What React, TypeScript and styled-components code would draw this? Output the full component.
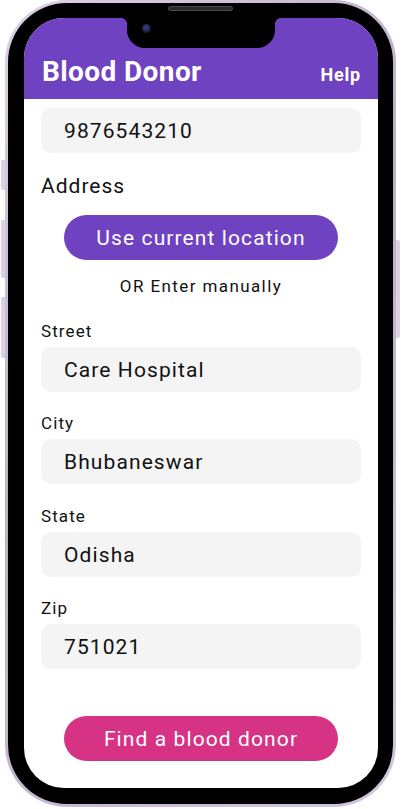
import React from "react";
import styled, { createGlobalStyle } from "styled-components";

const GlobalStyle = createGlobalStyle`
  html, body { margin: 0; padding: 0; background: #ffffff; }
  body { font-family: Roboto, "Liberation Sans", sans-serif; }
  * { box-sizing: border-box; }
`;

const Stage = styled.div`
  width: 401px;
  height: 809px;
  padding: 0 5px 2px 5px;
  position: relative;
`;

const PhoneRim = styled.div`
  position: relative;
  width: 391px;
  height: 807px;
  padding: 3px;
  border-radius: 62px;
  background: linear-gradient(135deg, #ddd1e4 0%, #bcaec6 45%, #d2c6da 100%);
`;

const SideButton = styled.div<{ $side: "left" | "right"; $top: number; $h: number }>`
  position: absolute;
  ${(p) => (p.$side === "left" ? "left: -4px;" : "right: -4px;")}
  top: ${(p) => p.$top}px;
  width: 4px;
  height: ${(p) => p.$h}px;
  background: #ddd2e4;
  border-radius: ${(p) => (p.$side === "left" ? "2px 0 0 2px" : "0 2px 2px 0")};
`;

const Bezel = styled.div`
  position: relative;
  width: 100%;
  height: 100%;
  background: #000000;
  border-radius: 59px;
  padding: 15px 15px 16px 16px;
`;

const Speaker = styled.div`
  position: absolute;
  top: 3px;
  left: 160px;
  width: 65px;
  height: 5px;
  border-radius: 3px;
  background: #2a2a2e;
  border: 1px solid #4a4a50;
`;

const Screen = styled.div`
  position: relative;
  width: 354px;
  height: 770px;
  border-radius: 40px;
  overflow: hidden;
  background: #ffffff;
  display: flex;
  flex-direction: column;
`;

const Notch = styled.div`
  position: absolute;
  top: 0;
  left: 103px;
  width: 148px;
  height: 30px;
  background: #000;
  border-radius: 0 0 18px 18px;

  &::before,
  &::after {
    content: "";
    position: absolute;
    top: 0;
    width: 7px;
    height: 7px;
  }
  &::before {
    left: -7px;
    background: radial-gradient(circle at 0 100%, transparent 7px, #000 7.5px);
  }
  &::after {
    right: -7px;
    background: radial-gradient(circle at 100% 100%, transparent 7px, #000 7.5px);
  }
`;

const Camera = styled.div`
  position: absolute;
  top: 6px;
  left: 15px;
  width: 9px;
  height: 9px;
  border-radius: 50%;
  background: radial-gradient(circle at 45% 40%, #3b4a8a 0%, #1a2045 55%, #0b0d1c 100%);
`;

const Header = styled.header`
  height: 81px;
  flex: none;
  background: #6f42c1;
  display: flex;
  align-items: baseline;
  justify-content: space-between;
  padding: 0 17px 13px 18px;
  align-content: flex-end;
  flex-wrap: wrap;
`;

const Title = styled.h1`
  margin: 0;
  color: #fff;
  font-size: 28px;
  line-height: 28px;
  font-weight: 700;
  letter-spacing: 0.4px;
`;

const HelpLink = styled.span`
  color: #fff;
  font-size: 18px;
  line-height: 18px;
  font-weight: 700;
  letter-spacing: 0.8px;
`;

const Content = styled.main`
  display: flex;
  flex-direction: column;
  padding: 9px 17px 0 17px;
`;

const Field = styled.div`
  height: 45px;
  border-radius: 10px;
  background: #f4f4f4;
  display: flex;
  align-items: center;
  padding: 2px 0 0 23px;
  font-size: 21px;
  line-height: 1;
  color: #111;
  letter-spacing: 1.1px;
`;

const SectionLabel = styled.div`
  margin-top: 21px;
  font-size: 21px;
  line-height: 25px;
  color: #111;
  letter-spacing: 1px;
`;

const FieldLabel = styled.div`
  margin-top: 21.5px;
  margin-bottom: 6px;
  font-size: 17px;
  line-height: 20px;
  color: #111;
  letter-spacing: 1.1px;
`;

const PillButton = styled.button<{ $color: string; $mt: number }>`
  align-self: center;
  margin-top: ${(p) => p.$mt}px;
  width: 274px;
  height: 45px;
  border: none;
  border-radius: 23px;
  background: ${(p) => p.$color};
  color: #fff;
  font-family: Roboto, "Liberation Sans", sans-serif;
  font-size: 21px;
  letter-spacing: 1.1px;
  padding: 1px 0 0 0;
  cursor: pointer;
`;

const OrText = styled.div`
  margin-top: 16px;
  text-align: center;
  font-size: 17px;
  line-height: 20px;
  color: #111;
  letter-spacing: 1.4px;
  margin-bottom: 3px;
`;

const fields = [
  { label: "Street", value: "Care Hospital" },
  { label: "City", value: "Bhubaneswar" },
  { label: "State", value: "Odisha" },
  { label: "Zip", value: "751021" },
];

export default function App() {
  return (
    <>
      <GlobalStyle />
      <Stage>
        <PhoneRim>
          <SideButton $side="left" $top={160} $h={30} />
          <SideButton $side="left" $top={220} $h={58} />
          <SideButton $side="left" $top={297} $h={61} />
          <SideButton $side="right" $top={240} $h={98} />
          <Bezel>
            <Speaker />
            <Screen>
              <Notch>
                <Camera />
              </Notch>
              <Header>
                <Title>Blood Donor</Title>
                <HelpLink>Help</HelpLink>
              </Header>
              <Content>
                <Field>9876543210</Field>
                <SectionLabel>Address</SectionLabel>
                <PillButton $color="#6f42c1" $mt={16}>
                  Use current location
                </PillButton>
                <OrText>OR Enter manually</OrText>
                {fields.map((f) => (
                  <React.Fragment key={f.label}>
                    <FieldLabel>{f.label}</FieldLabel>
                    <Field>{f.value}</Field>
                  </React.Fragment>
                ))}
                <PillButton $color="#d63384" $mt={47}>
                  Find a blood donor
                </PillButton>
              </Content>
            </Screen>
          </Bezel>
        </PhoneRim>
      </Stage>
    </>
  );
}
